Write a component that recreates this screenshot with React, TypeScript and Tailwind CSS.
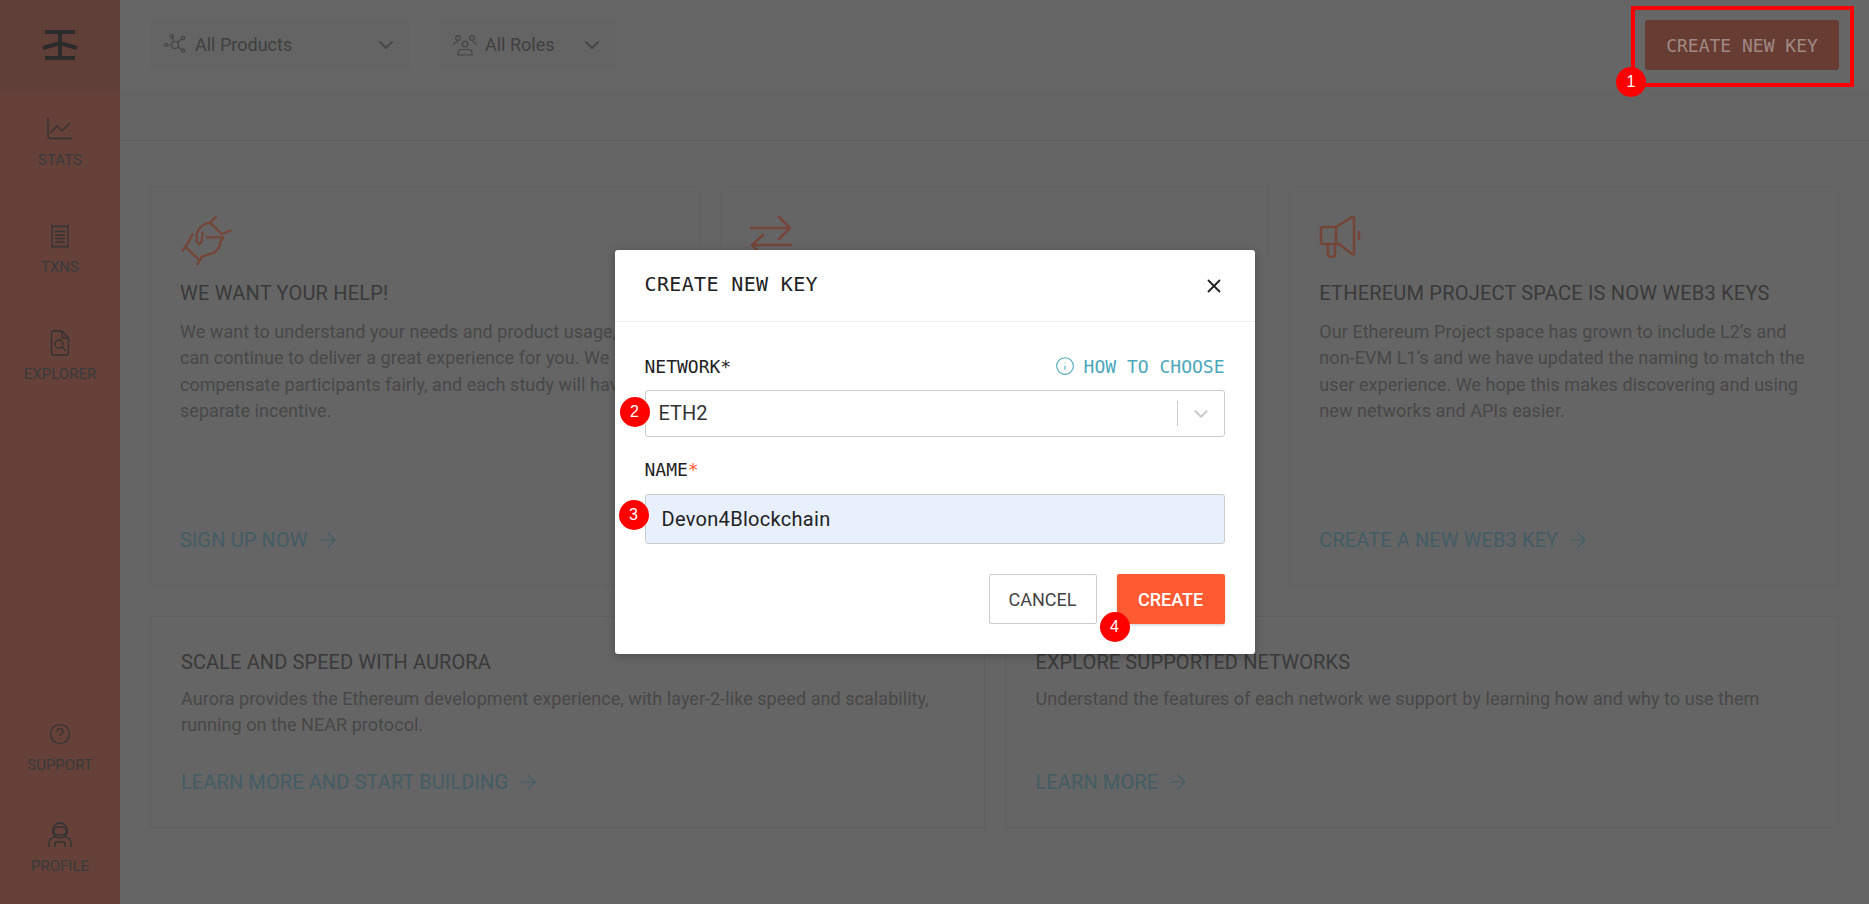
import React from "react";
import { ArrowRight, ChevronDown, X, Info } from "lucide-react";

const sans = "font-['Roboto','Noto_Sans',sans-serif]";
const mono = "font-['DejaVu_Sans_Mono','Liberation_Mono',monospace]";

function Logo() {
  return (
    <svg width="36" height="32" viewBox="0 0 36 32" fill="none" stroke="#2b2b2b" strokeWidth="4">
      <path d="M3 3h30M3 29h30M18 3v26M1 19l17-5 17 5" />
    </svg>
  );
}
function StatsIcon() {
  return (
    <svg width="26" height="24" viewBox="0 0 26 24" fill="none" stroke="#333" strokeWidth="1.3">
      <path d="M1 1v18q0 2.500 2 2.500h22M3 16l7-7 5 5 8-8" />
    </svg>
  );
}
function TxnsIcon() {
  return (
    <svg width="18" height="25" viewBox="0 0 18 25" fill="none" stroke="#333" strokeWidth="1.3">
      <path d="M1 1.500l2 1.500 2-1.500 2 1.500 2-1.500 2 1.500 2-1.500 2 1.500 2-1.500v22l-2-1.500-2 1.500-2-1.500-2 1.500-2-1.500-2 1.500-2-1.500-2 1.500z" />
      <path d="M4 7.500h10M4 11h10M4 14.500h10M4 18h10" />
    </svg>
  );
}
function ExplorerIcon() {
  return (
    <svg width="20" height="26" viewBox="0 0 20 26" fill="none" stroke="#333" strokeWidth="1.3">
      <path d="M12 1H3.500Q1.500 1 1.500 3v20q0 2 2 2h13q2 0 2-2V8zM12 1v5q0 2 2 2h4.500" />
      <circle cx="9" cy="14" r="4" />
      <path d="M12 17l4 4" />
    </svg>
  );
}
function SupportIcon() {
  return (
    <svg width="22" height="22" viewBox="0 0 22 22" fill="none" stroke="#333" strokeWidth="1.2">
      <circle cx="11" cy="11" r="9.500" />
      <path d="M8 8.500q0-3 3-3t3 2.700q0 1.600-1.500 2.500T11 13M11 15v1.500" />
    </svg>
  );
}
function ProfileIcon() {
  return (
    <svg width="24" height="26" viewBox="0 0 24 26" fill="none" stroke="#333" strokeWidth="1.5">
      <circle cx="12" cy="8.500" r="7.500" />
      <rect x="6" y="5" width="12" height="8" rx="4" />
      <path d="M1 25v-3q0-6 6-7.500M23 25v-3q0-6-6-7.500M7 25v-4q0-1 1-1h8q1 0 1 1v4" />
    </svg>
  );
}
function NodesIcon() {
  return (
    <svg width="24" height="24" viewBox="0 0 24 24" fill="none" stroke="#444" strokeWidth="1.2">
      <circle cx="12" cy="12" r="3.500" />
      <circle cx="8.700" cy="3.300" r="1.700" />
      <circle cx="20" cy="5" r="1.600" />
      <circle cx="3" cy="12" r="1.500" />
      <circle cx="20" cy="17.500" r="1.600" />
      <path d="M9.500 5l1.500 3.700M18.700 6l-4.200 3.500M4.500 12h4M15 14l3.500 2.500" />
    </svg>
  );
}
function PeopleIcon() {
  return (
    <svg width="24" height="24" viewBox="0 0 24 24" fill="none" stroke="#444" strokeWidth="1.2">
      <circle cx="5" cy="5" r="2.300" />
      <circle cx="19" cy="5" r="2.300" />
      <circle cx="12" cy="11" r="2.800" />
      <path d="M1 12q0-3 4-3M23 12q0-3-4-3M5 22v-2q0-3.500 3.500-3.500h7q3.500 0 3.500 3.500v2z" />
    </svg>
  );
}
function HandsIcon() {
  return (
    <svg width="100" height="70" viewBox="0 0 300 210" fill="none" stroke="#74463a" strokeWidth="7" strokeLinecap="round" strokeLinejoin="round" className="-mx-[20px] -my-[12px]">
      <path d="M168 38l-18 18 35 34 27-10M150 56q-30 4-40 34v22q8 16 15 0l3-27" />
      <path d="M140 100h50l-10 15-2 15-13 15-40 13M98 90l-13 25-17 25M75 128l40 37M125 160l-13 20" />
    </svg>
  );
}
function SwapIcon() {
  return (
    <svg width="42" height="40" viewBox="0 0 42 40" fill="none" stroke="#74463a" strokeWidth="2.600" strokeLinecap="round" strokeLinejoin="round">
      <path d="M1 12h39M29 1l11 11-11 11M41 29H2M13 19L2 29l11 11" />
    </svg>
  );
}
function MegaphoneIcon() {
  return (
    <svg width="42" height="42" viewBox="0 0 42 42" fill="none" stroke="#74463a" strokeWidth="2.600" strokeLinecap="round" strokeLinejoin="round">
      <path d="M2 13q0-2 2-2h13L33 1q2-1 2 1v35q0 2-2 1L20 28H4q-2 0-2-2z" />
      <path d="M17 11v17M9 28v10q0 3 3.500 3t3.500-3V28M40 16v7" />
    </svg>
  );
}

function NavItem({ icon, label }: { icon: React.ReactNode; label: string }) {
  return (
    <div className="flex flex-col items-center">
      <div className="flex h-[26px] items-center justify-center">{icon}</div>
      <div className={`mt-[8px] text-[15px] leading-[20px] text-[#3a3a3a] ${sans}`}>{label}</div>
    </div>
  );
}

function Filter({ icon, label, className }: { icon: React.ReactNode; label: string; className: string }) {
  return (
    <div className={`flex h-[50px] items-center rounded-[3px] bg-[#646464] pl-[13px] pr-[12px] ${className}`}>
      {icon}
      <span className={`ml-[8px] -mt-[2px] text-[18px] text-[#404040] ${sans}`}>{label}</span>
      <ChevronDown className="ml-auto text-[#484848]" size={24} strokeWidth={2} />
    </div>
  );
}

function LinkText({ label }: { label: string }) {
  return (
    <div className={`flex items-center gap-[8px] text-[20px] leading-[24px] tracking-[0.100px] text-[#445c64] ${sans}`}>
      {label}
      <ArrowRight size={24} strokeWidth={1.2} />
    </div>
  );
}

function TopCard({ icon, title, lines, link }: { icon: React.ReactNode; title: string; lines: string[]; link: string }) {
  return (
    <div className="flex h-[400px] flex-col rounded-[2px] border border-[#626262] bg-[#656565] px-[29px] pt-[29px]">
      <div className="h-[46px]">{icon}</div>
      <div className={`mt-[18px] min-h-[26px] whitespace-nowrap text-[20px] leading-[26px] tracking-[0.200px] text-[#3a3a3a] ${sans}`}>{title}</div>
      <div className={`mt-[13px] text-[18px] leading-[26.400px] tracking-[0.050px] text-[#484848] ${sans}`}>
        {lines.map((l) => (
          <div key={l} className="whitespace-nowrap">{l}</div>
        ))}
      </div>
      <div className="mt-auto pb-[33px]">
        <LinkText label={link} />
      </div>
    </div>
  );
}

function BottomCard({ title, lines, link }: { title: string; lines: string[]; link: string }) {
  return (
    <div className="h-[212px] border border-[#606060] px-[30px] pt-[32px]">
      <div className={`whitespace-nowrap text-[20px] leading-[26px] tracking-[0.100px] text-[#3a3a3a] ${sans}`}>{title}</div>
      <div className={`mt-[11px] h-[53px] text-[18px] leading-[26.400px] tracking-[0.050px] text-[#484848] ${sans}`}>
        {lines.map((l) => (
          <div key={l} className="whitespace-nowrap">{l}</div>
        ))}
      </div>
      <div className="mt-[31px]">
        <LinkText label={link} />
      </div>
    </div>
  );
}

function Badge({ n, className }: { n: number; className: string }) {
  return (
    <div className={`absolute z-20 flex h-[30px] w-[30px] items-center justify-center rounded-full bg-[#fe0000] text-[16px] text-white font-['Liberation_Sans',sans-serif] ${className}`}>
      {n}
    </div>
  );
}

export default function App() {
  return (
    <div className="relative flex h-[904px] w-[1869px] overflow-hidden bg-[#666666]">
      <aside className="flex w-[120px] shrink-0 flex-col bg-[#65413a]">
        <div className="flex h-[90px] shrink-0 items-center justify-center bg-[#5f3f38]">
          <Logo />
        </div>
        <div className="flex flex-col gap-[53px] pt-[26px]">
          <NavItem icon={<StatsIcon />} label="STATS" />
          <NavItem icon={<TxnsIcon />} label="TXNS" />
          <NavItem icon={<ExplorerIcon />} label="EXPLORER" />
        </div>
        <div className="mt-auto flex flex-col gap-[47px] pb-[28px]">
          <NavItem icon={<SupportIcon />} label="SUPPORT" />
          <NavItem icon={<ProfileIcon />} label="PROFILE" />
        </div>
      </aside>

      <main className="flex min-w-0 flex-1 flex-col">
        <header className="flex h-[90px] shrink-0 items-center bg-[#666666] px-[30px]">
          <Filter icon={<NodesIcon />} label="All Products" className="w-[260px]" />
          <Filter icon={<PeopleIcon />} label="All Roles" className="ml-[30px] w-[176px]" />
          <button className={`ml-auto h-[50px] w-[194px] rounded-[3px] bg-[#663c33] text-[18px] text-[#a08a84] ${mono}`}>
            CREATE NEW KEY
          </button>
        </header>
        <div className="h-[51px] shrink-0 border-b border-[#5f5f5f] bg-[#646464]" />
        <div className="flex flex-1 flex-col gap-[30px] bg-[#656565] px-[30px] pt-[45px]">
          <div className="grid grid-cols-3 gap-[20px]">
            <TopCard
              icon={<HandsIcon />}
              title="WE WANT YOUR HELP!"
              lines={[
                "We want to understand your needs and product usage, so we",
                "can continue to deliver a great experience for you. We",
                "compensate participants fairly, and each study will have a",
                "separate incentive.",
              ]}
              link="SIGN UP NOW"
            />
            <TopCard icon={<SwapIcon />} title="" lines={[]} link="" />
            <TopCard
              icon={<MegaphoneIcon />}
              title="ETHEREUM PROJECT SPACE IS NOW WEB3 KEYS"
              lines={[
                "Our Ethereum Project space has grown to include L2’s and",
                "non-EVM L1’s and we have updated the naming to match the",
                "user experience. We hope this makes discovering and using",
                "new networks and APIs easier.",
              ]}
              link="CREATE A NEW WEB3 KEY"
            />
          </div>
          <div className="grid grid-cols-2 gap-[20px]">
            <BottomCard
              title="SCALE AND SPEED WITH AURORA"
              lines={[
                "Aurora provides the Ethereum development experience, with layer-2-like speed and scalability,",
                "running on the NEAR protocol.",
              ]}
              link="LEARN MORE AND START BUILDING"
            />
            <BottomCard
              title="EXPLORE SUPPORTED NETWORKS"
              lines={["Understand the features of each network we support by learning how and why to use them"]}
              link="LEARN MORE"
            />
          </div>
        </div>
      </main>

      {/* annotation around the page button */}
      <div className="absolute left-[1631px] top-[6px] z-10 h-[81px] w-[223px] border-[4px] border-[#fe0000]" />
      <Badge n={1} className="left-[1616px] top-[67px]" />

      {/* modal */}
      <div className="absolute inset-0 z-10 flex items-center justify-center">
        <div className="relative w-[640px] rounded-[3px] bg-white shadow-[0_2px_10px_rgba(0,0,0,0.25)]">
          <div className="flex h-[72px] items-center justify-between border-b border-[#eeeeee] px-[30px]">
            <span className={`-mt-[3px] text-[20px] tracking-[0.350px] text-[#222] ${mono}`}>CREATE NEW KEY</span>
            <X size={22} strokeWidth={2} className="text-[#222]" />
          </div>
          <div className="px-[30px] pt-[31px] pb-[30px]">
            <div className="flex h-[26px] items-center justify-between">
              <span className={`text-[18px] text-[#222] ${mono}`}>NETWORK*</span>
              <span className={`flex items-center gap-[9px] text-[18px] text-[#4aa8bb] ${mono}`}>
                <Info size={20} strokeWidth={1.3} />
                HOW TO CHOOSE
              </span>
            </div>
            <div className="mt-[11px] flex h-[47px] items-center rounded-[3px] border border-[#cccccc] pl-[13px]">
              <span className={`-mt-[1px] text-[20px] text-[#333] ${sans}`}>ETH2</span>
              <div className="ml-auto h-[25px] w-px bg-[#cccccc]" />
              <ChevronDown size={22} strokeWidth={2.4} className="mx-[12px] text-[#cccccc]" />
            </div>
            <div className="mt-[20px] h-[26px]">
              <span className={`relative -top-[1px] text-[18px] text-[#222] ${mono}`}>
                NAME<span className="text-[#ff5a32]">*</span>
              </span>
            </div>
            <div className="mt-[11px] flex h-[50px] items-center rounded-[3px] border border-[#cccccc] bg-[#e8f0fe] pl-[16px]">
              <span className={`-mt-[1px] text-[20px] tracking-[0.300px] text-[#222] ${sans}`}>Devon4Blockchain</span>
            </div>
            <div className="mt-[30px] flex justify-end gap-[20px]">
              <button className={`h-[50px] w-[108px] rounded-[2px] border border-[#cccccc] bg-white text-[18px] text-[#444] ${sans}`}>
                CANCEL
              </button>
              <button className={`h-[50px] w-[108px] rounded-[2px] bg-[#ff5a32] text-[18px] font-medium text-white shadow-[0_1px_3px_rgba(0,0,0,0.2)] ${sans}`}>
                CREATE
              </button>
            </div>
          </div>
          <Badge n={2} className="left-[5px] top-[147px]" />
          <Badge n={3} className="left-[4px] top-[250px]" />
          <Badge n={4} className="left-[485px] top-[362px]" />
        </div>
      </div>
    </div>
  );
}
